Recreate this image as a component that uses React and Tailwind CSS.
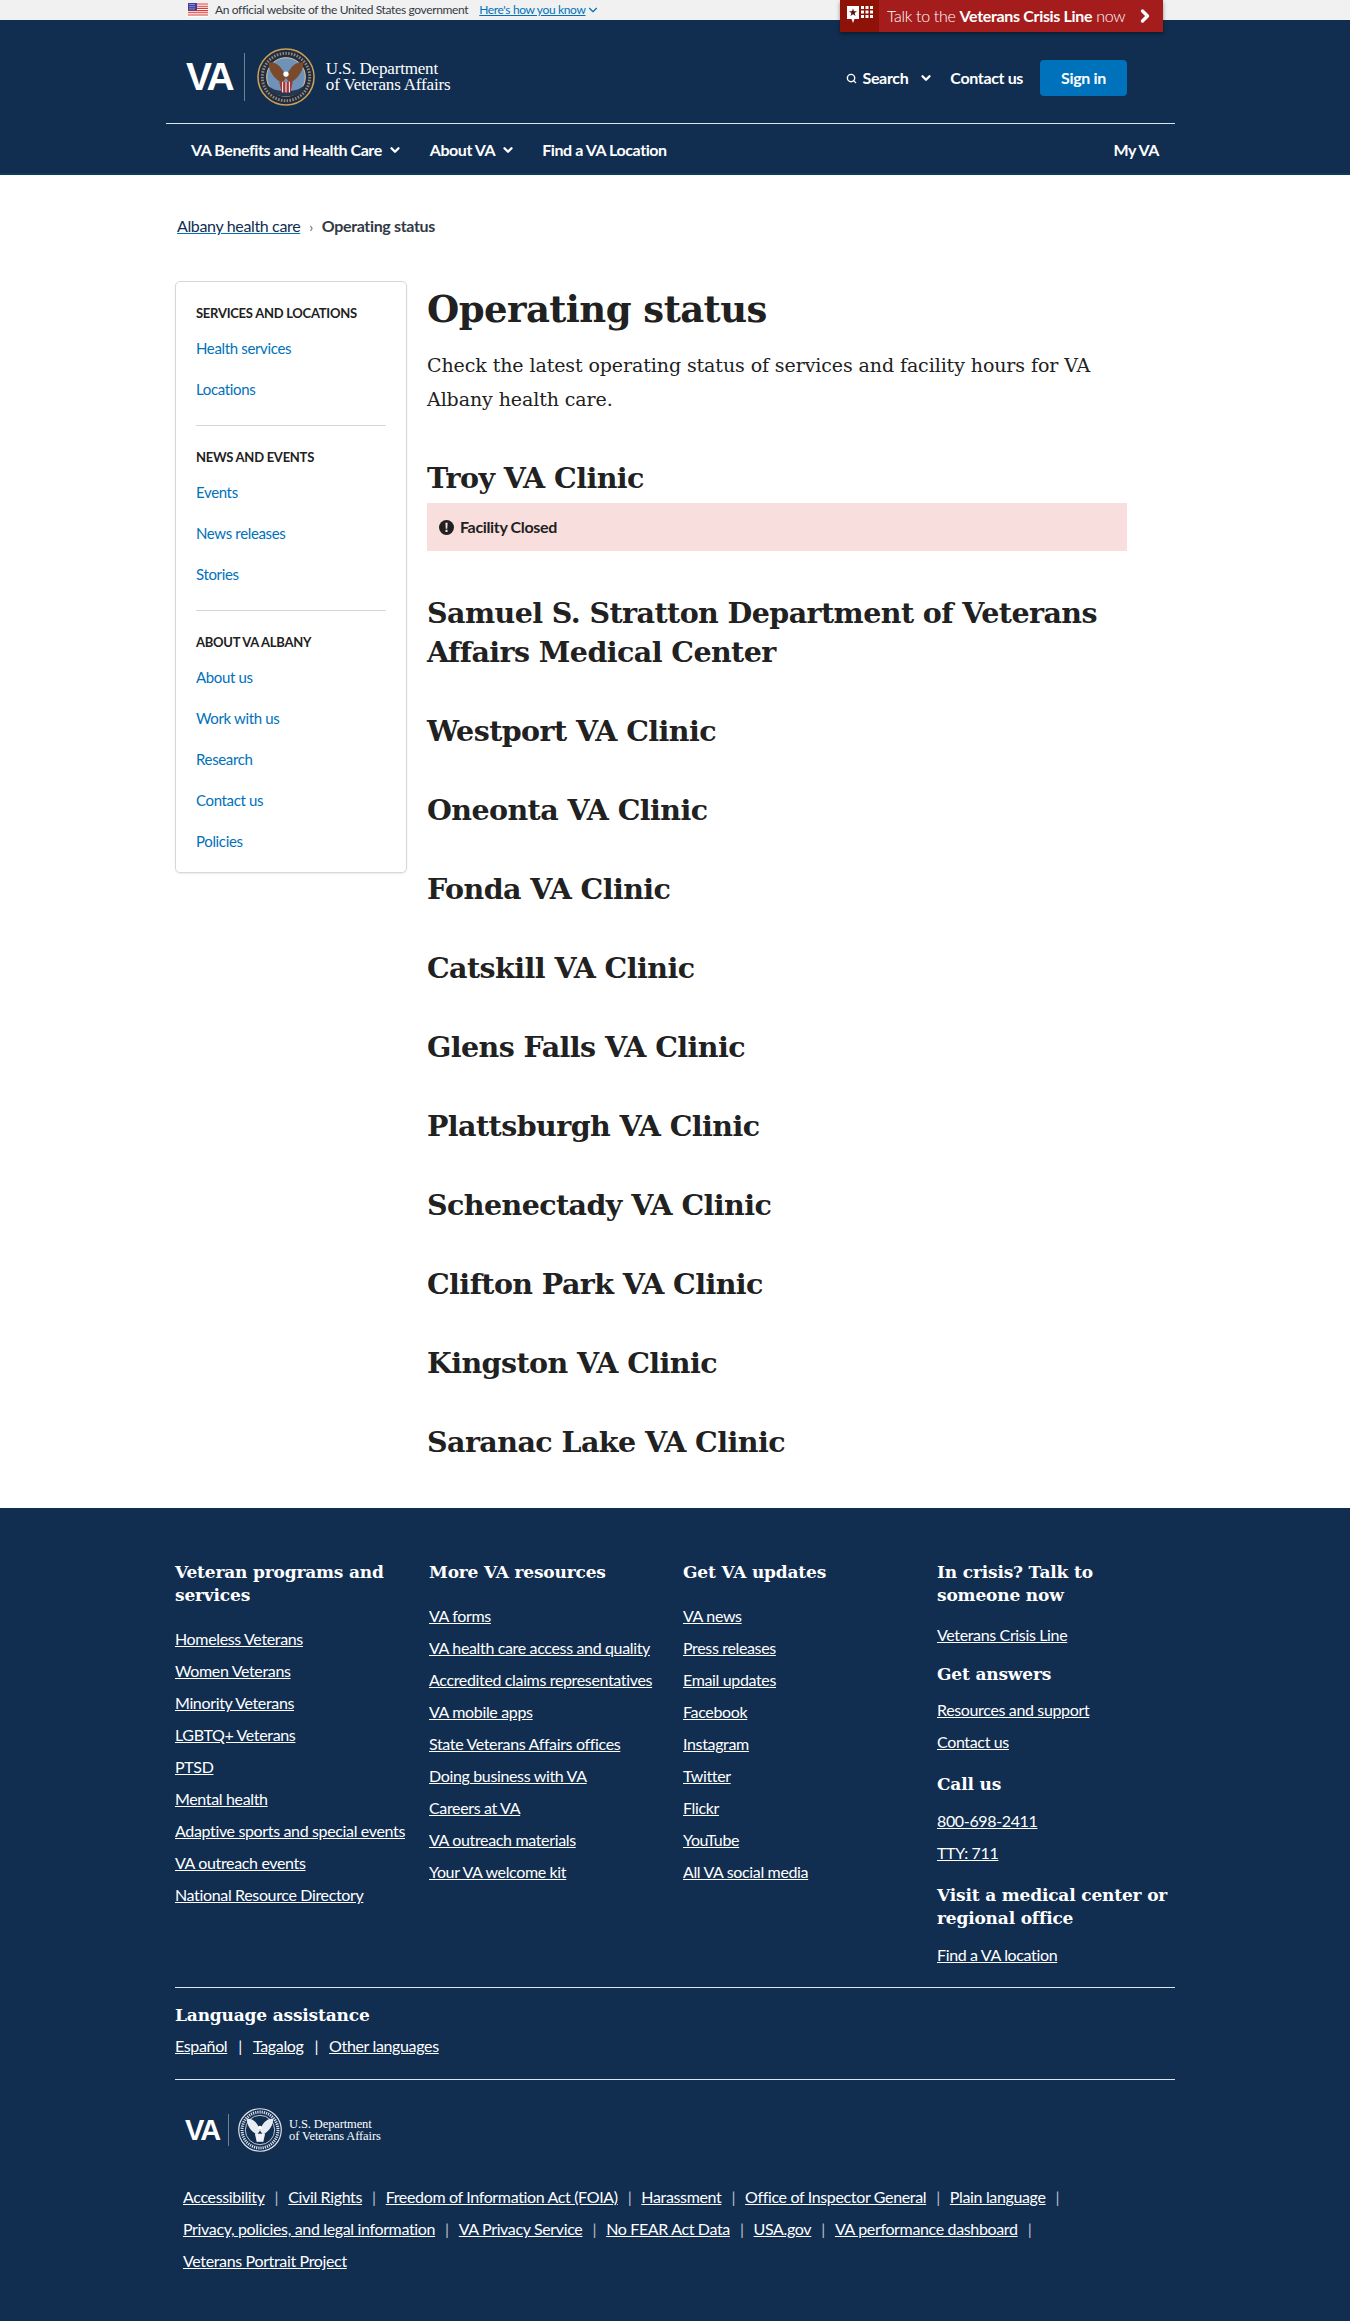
import React from 'react'
import { ChevronDown, ChevronRight, Search } from 'lucide-react'

const sans = 'font-[Lato,"Noto_Sans",sans-serif]'
const slab = 'font-["DejaVu_Serif",serif]'

const sideNav = [
  { title: 'SERVICES AND LOCATIONS', links: ['Health services', 'Locations'] },
  { title: 'NEWS AND EVENTS', links: ['Events', 'News releases', 'Stories'] },
  { title: 'ABOUT VA ALBANY', links: ['About us', 'Work with us', 'Research', 'Contact us', 'Policies'] },
]

const clinics = [
  'Westport VA Clinic',
  'Oneonta VA Clinic',
  'Fonda VA Clinic',
  'Catskill VA Clinic',
  'Glens Falls VA Clinic',
  'Plattsburgh VA Clinic',
  'Schenectady VA Clinic',
  'Clifton Park VA Clinic',
  'Kingston VA Clinic',
  'Saranac Lake VA Clinic',
]

const footerCols = [
  {
    title: 'Veteran programs and services',
    links: ['Homeless Veterans', 'Women Veterans', 'Minority Veterans', 'LGBTQ+ Veterans', 'PTSD', 'Mental health', 'Adaptive sports and special events', 'VA outreach events', 'National Resource Directory'],
  },
  {
    title: 'More VA resources',
    links: ['VA forms', 'VA health care access and quality', 'Accredited claims representatives', 'VA mobile apps', 'State Veterans Affairs offices', 'Doing business with VA', 'Careers at VA', 'VA outreach materials', 'Your VA welcome kit'],
  },
  {
    title: 'Get VA updates',
    links: ['VA news', 'Press releases', 'Email updates', 'Facebook', 'Instagram', 'Twitter', 'Flickr', 'YouTube', 'All VA social media'],
  },
]

const legalRows = [
  ['Accessibility', 'Civil Rights', 'Freedom of Information Act (FOIA)', 'Harassment', 'Office of Inspector General', 'Plain language'],
  ['Privacy, policies, and legal information', 'VA Privacy Service', 'No FEAR Act Data', 'USA.gov', 'VA performance dashboard'],
  ['Veterans Portrait Project'],
]

function Flag() {
  return (
    <svg width="20" height="14" viewBox="0 0 20 14" className="shrink-0">
      <rect width="20" height="14" fill="#fff" />
      <path d="M0 1h20M0 3.2h20M0 5.400h20M0 7.600h20M0 9.800h20M0 12h20" stroke="#d83933" strokeWidth="1.1" />
      <rect width="9" height="7.500" fill="#3b3f9e" />
      <path d="M1.500 1.500h6M1.500 3.700h6M1.500 5.900h6" stroke="#fff" strokeWidth="0.8" strokeDasharray="1 1" />
    </svg>
  )
}

// colour VA seal for the header, white one for the footer
function Seal({ size, plain }) {
  const ring = plain ? '#dfe4ec' : '#c9a15a'
  return (
    <svg width={size} height={size} viewBox="0 0 60 60" className="shrink-0">
      <circle cx="30" cy="30" r="29" fill={plain ? '#112e51' : '#232b3d'} stroke={ring} strokeWidth="1.6" />
      <circle cx="30" cy="30" r="24.500" fill="none" stroke={plain ? '#dfe4ec' : '#8d8a80'} strokeWidth={plain ? 4 : 3} strokeDasharray="1.600 1.400" />
      <circle cx="30" cy="30" r="20" fill={plain ? '#112e51' : '#6f93b8'} stroke={plain ? '#fff' : '#d8c9a8'} strokeWidth="1" />
      {!plain && <path d="M11 38c6 9 32 9 38 0l-3 7c-8 7-24 7-32 0z" fill="#27364f" />}
      <path d="M30 31C27 20 19 13 12 15c0 8 5 17 14 21zM30 31c3-11 11-18 18-16 0 8-5 17-14 21z" fill={plain ? '#e8ecf2' : '#7a4a2a'} />
      <circle cx="30" cy="27" r="2.800" fill="#fff" />
      <path d="M23 35h14l-2.500 11h-9z" fill={plain ? '#e8ecf2' : '#a5343a'} />
      <path d="M26.500 35v11M30 35v11M33.500 35v11" stroke="#fff" strokeWidth="1" />
    </svg>
  )
}

function Logo({ small }) {
  return (
    <div className="flex items-center">
      <span className={`font-["Liberation_Sans",sans-serif] font-bold text-white tracking-[-0.07em] ${small ? 'text-[29px] leading-[32px]' : 'text-[39px] leading-[42px]'}`}>VA</span>
      <span className={`bg-white/40 w-px ${small ? 'h-8 mx-[9px]' : 'h-[48px] mx-[12px]'}`} />
      <Seal size={small ? 44 : 58} plain={small} />
      <div className={`font-["Liberation_Serif",serif] text-white tracking-[-0.01em] ${small ? 'ml-[7px] text-[12.5px] leading-[12px]' : 'ml-[11px] text-[17px] leading-[16px]'}`}>
        <div>U.S. Department</div>
        <div>of Veterans Affairs</div>
      </div>
    </div>
  )
}

function CrisisIcon() {
  return (
    <svg width="28" height="26" viewBox="0 0 28 26">
      <path d="M1 3h12v13H8.500L7 20l-1.500-4H1z" fill="#fff" />
      <path d="M7 5.500l1 2.800h3l-2.400 1.700.9 2.900L7 11.200l-2.500 1.700.9-2.900L3 8.300h3z" fill="#5b1010" />
      <path d="M15 3h3v3h-3zM19.500 3h3v3h-3zM24 3h3v3h-3zM15 7.500h3v3h-3zM19.500 7.500h3v3h-3zM24 7.500h3v3h-3zM15 12h3v3h-3zM19.500 12h3v3h-3zM24 12h3v3h-3z" fill="#fff" />
    </svg>
  )
}

function Header() {
  return (
    <header className="relative">
      {/* gov banner */}
      <div className="bg-[#f1f1f1] h-5">
        <div className="w-[1009px] ml-[166px] pl-[22px] flex items-center h-5 gap-[7px] text-[12px] text-[#323a45] tracking-[-0.03em]">
          <Flag />
          <span>An official website of the United States government</span>
          <span className="text-[#0071bb] underline ml-[4px]">Here's how you know</span>
          <ChevronDown size={14} className="text-[#0071bb] -ml-[6px]" />
        </div>
      </div>

      {/* crisis tab */}
      <div className="absolute top-0 left-[840px] w-[323px] h-8 bg-[#a51c1c] flex items-center text-white shadow-[0_2px_4px_rgba(0,0,0,0.4)]">
        <div className="bg-[#8f1208] h-8 w-[39px] flex items-center justify-center">
          <CrisisIcon />
        </div>
        <span className="ml-2 text-[16px] font-light whitespace-nowrap tracking-[-0.02em]">Talk to the <b className="font-bold">Veterans Crisis Line</b> now</span>
        <ChevronRight size={20} strokeWidth={4} className="ml-auto mr-2" />
      </div>

      <div className="bg-[#112e51] h-[155px] border-b-2 border-[#0f3a5c]">
        <div className="w-[1009px] ml-[166px]">
          <div className="h-[104px] border-b border-[#dce4ef] flex items-center justify-between pl-5 pr-[48px]">
            <div className="mt-[11px]"><Logo /></div>
            <div className="flex items-center text-white font-bold text-[16px] mt-[13px]">
              <Search size={11} strokeWidth={3} className="mr-[6px]" />
              <span>Search</span>
              <ChevronDown size={14} strokeWidth={4} className="ml-[11px]" />
              <span className="ml-[17px]">Contact us</span>
              <span className="ml-[17px] bg-[#0071bb] rounded-[4px] h-9 w-[87px] flex items-center justify-center">Sign in</span>
            </div>
          </div>
          <nav className="flex items-center h-[50px] pt-[2px] pl-[25px] pr-[16px] text-white font-bold text-[16px] tracking-[-0.027em]">
            <span>VA Benefits and Health Care</span>
            <ChevronDown size={14} strokeWidth={4} className="ml-[6px]" />
            <span className="ml-[28px]">About VA</span>
            <ChevronDown size={14} strokeWidth={4} className="ml-[6px]" />
            <span className="ml-[27px]">Find a VA Location</span>
            <span className="ml-auto">My VA</span>
          </nav>
        </div>
      </div>
    </header>
  )
}

function Sidebar() {
  return (
    <aside className="w-[232px] h-[592px] shrink-0 border border-[#d6d7d9] rounded-[5px] shadow-[0_1px_2px_rgba(0,0,0,0.08)] px-5 pt-[21px]">
      {sideNav.map((group, i) => (
        <div key={group.title} className={i > 0 ? 'border-t border-[#d6d7d9] mt-[15px] pt-[21px]' : ''}>
          <h4 className="text-[13px] leading-[20px] font-bold text-[#212121] tracking-[-0.02em]">{group.title}</h4>
          <ul className="mt-[5px]">
            {group.links.map((l) => (
              <li key={l} className="h-[41px] flex items-center text-[15px] text-[#0071bb]">{l}</li>
            ))}
          </ul>
        </div>
      ))}
    </aside>
  )
}

function Main() {
  const h2 = `${slab} font-bold text-[28.5px] leading-[39px] text-[#212121] tracking-[-0.02em]`
  return (
    <main className="w-[700px] ml-5 pt-[3px]">
      <h1 className={`${slab} font-bold text-[37px] leading-[50px] text-[#212121] tracking-[-0.015em]`}>Operating status</h1>
      <p className={`${slab} text-[19px] leading-[34px] text-[#212121] mt-[14px] tracking-[-0.005em]`}>
        Check the latest operating status of services and facility hours for VA Albany health care.
      </p>
      <h2 className={`${h2} mt-[43px]`}>Troy VA Clinic</h2>
      <div className="mt-[5px] bg-[#f9dede] h-[48px] flex items-center pl-3 text-[16px] font-bold text-[#212121]">
        <svg width="15" height="15" viewBox="0 0 16 16" className="mr-[6px]">
          <circle cx="8" cy="8" r="8" fill="#212121" />
          <path d="M6.800 3h2.400l-.4 6.300H7.200zM6.900 10.500h2.200v2.300H6.900z" fill="#f9dede" />
        </svg>
        Facility Closed
      </div>
      <h2 className={`${h2} mt-[43px]`}>
        Samuel S. Stratton Department of Veterans Affairs Medical Center
      </h2>
      {clinics.map((c) => (
        <h2 key={c} className={`${h2} mt-[40px]`}>{c}</h2>
      ))}
    </main>
  )
}

function FootHead({ children, className = '' }) {
  return <h3 className={`${slab} font-bold text-[17px] leading-[23px] text-white tracking-[-0.01em] ${className}`}>{children}</h3>
}

function FootLink({ children }) {
  return <a className="block text-[16px] leading-[32px] h-8 text-white underline whitespace-nowrap">{children}</a>
}

function Footer() {
  return (
    <footer className="bg-[#112e51] h-[813px] pt-[53px]">
      <div className="w-[1000px] mx-auto">
        <div className="grid grid-cols-[254px_254px_254px_238px] h-[426px]">
          {footerCols.map((col) => (
            <div key={col.title} className="w-[232px]">
              <FootHead>{col.title}</FootHead>
              <div className="mt-[16px]">
                {col.links.map((l) => <FootLink key={l}>{l}</FootLink>)}
              </div>
            </div>
          ))}
          <div>
            <FootHead>In crisis? Talk to someone now</FootHead>
            <div className="mt-[12px]"><FootLink>Veterans Crisis Line</FootLink></div>
            <FootHead className="mt-[12px]">Get answers</FootHead>
            <div className="mt-[8px]">
              <FootLink>Resources and support</FootLink>
              <FootLink>Contact us</FootLink>
            </div>
            <FootHead className="mt-[15px]">Call us</FootHead>
            <div className="mt-[9px]">
              <FootLink>800-698-2411</FootLink>
              <FootLink>TTY: 711</FootLink>
            </div>
            <FootHead className="mt-[15px]">Visit a medical center or regional office</FootHead>
            <div className="mt-[9px]"><FootLink>Find a VA location</FootLink></div>
          </div>
        </div>

        <div className="border-t border-[#dce4ef] pt-[16px] h-[92px]">
          <FootHead>Language assistance</FootHead>
          <div className="flex items-center mt-[7px] text-[16px] text-white">
            <a className="underline">Español</a>
            <span className="mx-[11px]">|</span>
            <a className="underline">Tagalog</a>
            <span className="mx-[11px]">|</span>
            <a className="underline">Other languages</a>
          </div>
        </div>

        <div className="border-t border-[#dce4ef] pt-[28px] pl-[10px]">
          <Logo small />
          <div className="mt-[29px] -ml-[2px]">
            {legalRows.map((row, i) => (
              <div key={i} className="flex items-center h-8 text-[16px] text-white whitespace-nowrap">
                {row.map((l) => (
                  <React.Fragment key={l}>
                    <a className="underline">{l}</a>
                    {row.length > 1 && <span className="mx-[10px] text-white/70">|</span>}
                  </React.Fragment>
                ))}
              </div>
            ))}
          </div>
        </div>
      </div>
    </footer>
  )
}

export default function App() {
  return (
    <div className={`${sans} bg-white w-[1350px] tracking-[-0.022em]`}>
      <Header />
      <div className="w-[1000px] mx-auto">
        <div className="h-[106px] pb-[2px] flex items-center text-[16px] pl-[2px] -mt-[1px]">
          <a className="text-[#112e51] underline decoration-[#0071bb]">Albany health care</a>
          <span className="mx-[9px] text-[#5b616b] text-[14px]">›</span>
          <span className="font-bold text-[#323a45]">Operating status</span>
        </div>
        <div className="flex h-[1228px] pt-px">
          <Sidebar />
          <Main />
        </div>
      </div>
      <Footer />
    </div>
  )
}
